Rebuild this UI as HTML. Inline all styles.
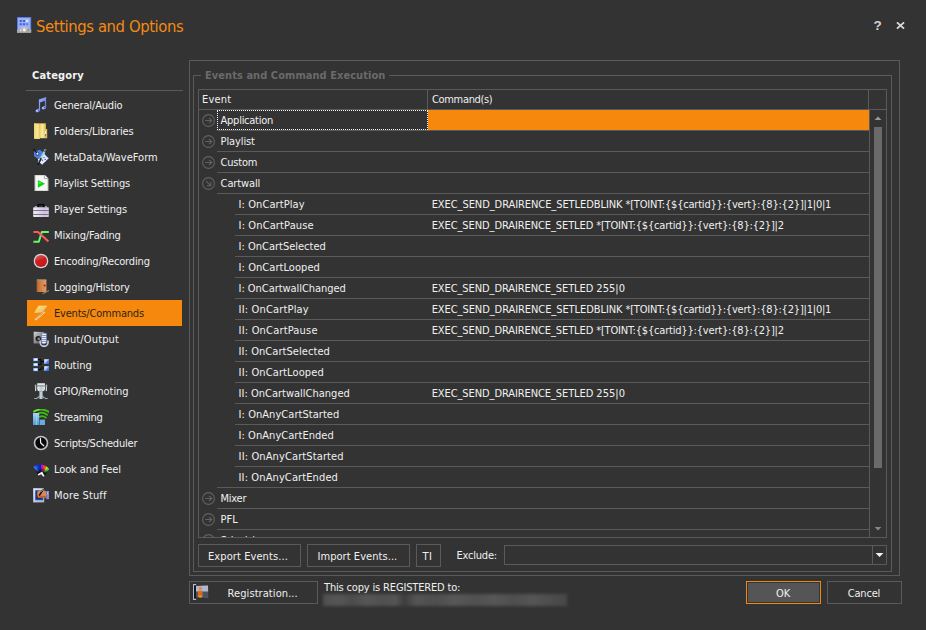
<!DOCTYPE html><html><head><meta charset="utf-8"><title>Settings and Options</title><style>
*{margin:0;padding:0;box-sizing:border-box}
html,body{width:926px;height:630px;overflow:hidden;background:#333333}
body{position:relative;font-family:"DejaVu Sans Condensed","Liberation Sans",sans-serif;font-size:11px;color:#f0f0f0;line-height:13px}
.a{position:absolute;white-space:pre}
.b{position:absolute;border:1px solid #5a5a5a}
.ln{position:absolute;height:1px;background:#5a5a5a}
.vl{position:absolute;width:1px;background:#5a5a5a}
.title{left:36px;top:16px;font-size:16.5px;line-height:21px;color:#f28a14}
.cat{left:32px;top:69px;font-weight:bold;color:#f2f2f2}
.si{left:27px;width:155px;height:26px}
.si svg{position:absolute;left:6px;top:5px}
.si span{position:absolute;left:27px;top:7px}
.sel{background:#f6890d;color:#2c2418}
.gt{left:205px;top:69px;font-weight:bold;color:#6a6a6a}
.row{position:absolute;left:0;width:670px;height:21px}
.row span{position:absolute;top:4px;white-space:pre}
.row i{position:absolute;bottom:0;right:0;height:1px;background:#5a5a5a}
.row svg{position:absolute;left:3px;top:4px}
.btn{position:absolute;border:1px solid #5a5a5a;height:23px}
.btn span{position:absolute;top:5px;white-space:pre}
</style></head><body>
<svg class="a" style="left:17px;top:17px" width="15" height="16" viewBox="0 0 15 16"><defs><linearGradient id="tg" x1="0" y1="0" x2="0" y2="1"><stop offset="0" stop-color="#d0d0d0"/><stop offset="1" stop-color="#9c9c9c"/></linearGradient></defs><rect x="0" y="0" width="14.2" height="16" rx="0.6" fill="#5a78ec"/><rect x="1" y="1" width="12.2" height="11.5" fill="#9db0f2"/><rect x="2.6" y="3" width="2.2" height="2" fill="#3c64dc"/><rect x="5.9" y="3" width="2.2" height="2" fill="#3c64dc"/><rect x="9" y="2.8" width="2.2" height="2.2" fill="#b8f8ff"/><rect x="2.6" y="6.2" width="2.2" height="2" fill="#3c64dc"/><rect x="5.9" y="6.2" width="2.2" height="2" fill="#3c64dc"/><rect x="9" y="6.2" width="2.2" height="2" fill="#5c80e4"/><path d="M0 12.6 H3 Q7.3 6.8 11.6 12.6 H14.2 V15.6 Q14.2 16 13.8 16 H0.4 Q0 16 0 15.6 Z" fill="url(#tg)"/><circle cx="7.3" cy="13" r="1.5" fill="#f4f4f4"/><rect x="3" y="12.6" width="1.2" height="1.6" fill="#f0f0f0"/><rect x="10.1" y="12.2" width="0.9" height="1.7" fill="#f09030"/><rect x="11" y="12.2" width="0.9" height="1.7" fill="#30b040"/></svg>
<div class="a title" style="letter-spacing:-0.412px;">Settings and Options</div>
<div class="a" style="left:873.4px;top:18.4px;font-weight:bold;font-size:13.5px;line-height:16px;color:#d4d4d4;font-family:'Liberation Sans',sans-serif">?</div>
<svg class="a" style="left:896px;top:22px" width="9" height="7" viewBox="0 0 9 7"><path d="M0.9 0.3 L8.1 6.7 M8.1 0.3 L0.9 6.7" stroke="#dadada" stroke-width="1.7" fill="none"/></svg>
<div class="a cat" style="letter-spacing:0.174px;">Category</div>
<div class="ln" style="left:26px;top:90px;width:157px"></div>
<div class="a si" style="top:92px"><svg width="16" height="16" viewBox="0 0 16 16"><defs><linearGradient id="n1" x1="0" y1="0" x2="1" y2="1"><stop offset="0" stop-color="#9fb4ff"/><stop offset="1" stop-color="#5a70d8"/></linearGradient></defs><path d="M5.9 2.5 L13.1 0 V11 H11.9 V3.8 L7.1 5.5 V14 H5.9 Z" fill="url(#n1)"/><ellipse cx="4.8" cy="13.6" rx="2.3" ry="1.6" transform="rotate(-20 4.8 13.6)" fill="#7f98f0"/><ellipse cx="10.9" cy="10.7" rx="2.3" ry="1.6" transform="rotate(-20 10.9 10.7)" fill="#7f98f0"/><ellipse cx="4" cy="13.7" rx="0.9" ry="0.7" fill="#d8e4ff"/><ellipse cx="10.1" cy="10.9" rx="0.9" ry="0.7" fill="#d8e4ff"/><ellipse cx="5.6" cy="13.3" rx="0.8" ry="0.5" fill="#3040c0"/><ellipse cx="11.6" cy="10.4" rx="0.8" ry="0.5" fill="#3040c0"/></svg><span style="letter-spacing:-0.151px;">General/Audio</span></div>
<div class="a si" style="top:118px"><svg width="16" height="16" viewBox="0 0 16 16"><defs><linearGradient id="f1" x1="0" y1="0" x2="1" y2="0"><stop offset="0" stop-color="#ecc85c"/><stop offset="0.5" stop-color="#f8eaa0"/><stop offset="1" stop-color="#e4bc50"/></linearGradient><linearGradient id="f2" x1="0" y1="0" x2="1" y2="0"><stop offset="0" stop-color="#f0d470"/><stop offset="0.6" stop-color="#f6e69a"/><stop offset="1" stop-color="#e8c860"/></linearGradient></defs><path d="M1 0.3 H12.8 V6 H14.2 V15.2 H6.5 V16 H1 Z" fill="#e6bf52"/><path d="M6.3 1 H12.5 V15 H6.3 Z" fill="url(#f1)"/><path d="M1 0.5 L6 1.2 L7 15.9 L1 15.3 Z" fill="url(#f2)"/><rect x="12" y="8.1" width="1.1" height="3" fill="#f4f4f4"/><rect x="12" y="11" width="1.1" height="2.2" fill="#2c90e0"/></svg><span style="letter-spacing:-0.128px;">Folders/Libraries</span></div>
<div class="a si" style="top:144px"><svg width="16" height="16" viewBox="0 0 16 16"><path d="M1 2.6 L7 0.8 L11 4.2 L5.2 10 L1 7.2 Z" fill="#4a7ee8"/><path d="M5 9.8 L11 4.4 L15.8 9.4 L9.2 15.8 L5 12.4 Z" fill="#e6eaf8" stroke="#3054a8" stroke-width="0.8" stroke-dasharray="1 1"/><circle cx="9.4" cy="11.2" r="0.7" fill="#2a50b0"/><circle cx="11" cy="8.6" r="0.7" fill="#2a50b0"/><circle cx="12.2" cy="10.4" r="0.7" fill="#2a50b0"/><circle cx="4.4" cy="4.6" r="1.5" fill="#f4f4f4" stroke="#203040" stroke-width="0.8"/><path d="M0.3 0 L4 3.8" stroke="#101010" stroke-width="1.1"/><path d="M12.6 0.4 L7.6 10.4" stroke="#9cdcec" stroke-width="2"/><path d="M13 1 L11.6 3" stroke="#505050" stroke-width="1.6"/><path d="M8 9 L4.8 15.6" stroke="#181818" stroke-width="2"/><path d="M7 9.4 L5 13.6" stroke="#d0d0d0" stroke-width="0.8"/></svg><span style="letter-spacing:0.012px;">MetaData/WaveForm</span></div>
<div class="a si" style="top:170px"><svg width="16" height="16" viewBox="0 0 16 16"><path d="M2 0 H11.6 L15 3.4 V16 H2 Z" fill="#f6f6f6" stroke="#bcbcbc" stroke-width="1"/><path d="M11.4 0.2 V3.6 H14.8" fill="#ffffff" stroke="#a0a0a0" stroke-width="0.9"/><path d="M4.9 5 L12 8.7 L4.9 12.7 Z" fill="#12cc12"/><path d="M5.4 6.2 L9 8 L5.4 9.6 Z" fill="#30f030"/></svg><span style="letter-spacing:-0.166px;">Playlist Settings</span></div>
<div class="a si" style="top:196px"><svg width="16" height="16" viewBox="0 0 16 16"><defs><linearGradient id="b1" x1="0" y1="0" x2="1" y2="0"><stop offset="0" stop-color="#f0ecf8"/><stop offset="0.75" stop-color="#d0c0e4"/><stop offset="1" stop-color="#d8d0e8"/></linearGradient></defs><path d="M5.3 6.4 V3.6 H10.6 V6.4" fill="none" stroke="#050505" stroke-width="1.4"/><rect x="2" y="5.2" width="2" height="1.2" fill="#b8b8b8"/><rect x="12" y="5.2" width="2" height="1.2" fill="#b8b8b8"/><rect x="0.2" y="6.2" width="15.6" height="9.8" rx="0.8" fill="url(#b1)"/><rect x="0.2" y="9" width="15.6" height="0.9" fill="#6c6c6c"/><rect x="0.2" y="13" width="15.6" height="0.9" fill="#6c6c6c"/></svg><span style="letter-spacing:-0.095px;">Player Settings</span></div>
<div class="a si" style="top:222px"><svg width="16" height="16" viewBox="0 0 16 16"><path d="M0.4 14.7 H5.8 L8.8 5 H15.8" fill="none" stroke="#68f868" stroke-width="2" stroke-linejoin="round"/><path d="M0.4 5 H5 L15.4 14.4" fill="none" stroke="#fc5858" stroke-width="2.1" stroke-linejoin="round"/></svg><span style="letter-spacing:-0.103px;">Mixing/Fading</span></div>
<div class="a si" style="top:248px"><svg width="16" height="16" viewBox="0 0 16 16"><defs><linearGradient id="r1" x1="0" y1="0" x2="0.4" y2="1"><stop offset="0" stop-color="#e06060"/><stop offset="0.45" stop-color="#d03030"/><stop offset="0.5" stop-color="#c82020"/><stop offset="1" stop-color="#cc1818"/></linearGradient></defs><circle cx="8" cy="8" r="7.3" fill="#d4dade"/><circle cx="8" cy="8" r="6.1" fill="url(#r1)"/></svg><span style="letter-spacing:-0.138px;">Encoding/Recording</span></div>
<div class="a si" style="top:274px"><svg width="16" height="16" viewBox="0 0 16 16"><defs><linearGradient id="k1" x1="0" y1="0" x2="1" y2="0"><stop offset="0" stop-color="#a85c2c"/><stop offset="0.25" stop-color="#c87840"/><stop offset="1" stop-color="#e49c68"/></linearGradient></defs><rect x="3.8" y="0.6" width="9.6" height="1" fill="#e8e0d0"/><rect x="3.6" y="1.2" width="9.8" height="11.8" rx="0.5" fill="url(#k1)"/><circle cx="11.6" cy="6.6" r="1" fill="#a81c0c"/><path d="M9.6 14.6 L16 11.6" stroke="#8c8458" stroke-width="1.2"/></svg><span style="letter-spacing:-0.133px;">Logging/History</span></div>
<div class="a si sel" style="top:300px"><svg width="16" height="16" viewBox="0 0 16 16"><defs><linearGradient id="l1" x1="0" y1="0" x2="1" y2="1"><stop offset="0" stop-color="#f8e890"/><stop offset="1" stop-color="#e8b840"/></linearGradient></defs><path d="M5.6 1 H14 L8.8 7 L1.8 7.4 Z" fill="url(#l1)" stroke="#f4dca0" stroke-width="0.6"/><path d="M11.8 6.6 L2.4 14.8" stroke="#f4e0b8" stroke-width="1.8"/><path d="M11.4 6.6 L3 14" stroke="#b46c30" stroke-width="1" stroke-dasharray="1 0.6"/></svg><span style="letter-spacing:-0.198px;">Events/Commands</span></div>
<div class="a si" style="top:326px"><svg width="16" height="16" viewBox="0 0 16 16"><defs><linearGradient id="i1" x1="0" y1="0" x2="1" y2="1"><stop offset="0" stop-color="#d8d8d8"/><stop offset="0.5" stop-color="#909090"/><stop offset="1" stop-color="#404040"/></linearGradient></defs><path d="M0.7 0.7 L11 1 V12.4 L0.7 12.4 Z" fill="url(#i1)"/><circle cx="5.2" cy="7.6" r="2.7" fill="#1c1c1c"/><circle cx="5.7" cy="7.9" r="1.3" fill="#8a8a8a"/><path d="M7.2 9.4 V11.4 a3.9 3.9 0 0 0 7.8 0 V9.4" fill="none" stroke="#c0c8e0" stroke-width="1.7"/><path d="M8.4 2.2 H13.6 V10.6 Q13.6 12.9 11 12.9 Q8.4 12.9 8.4 10.6 Z" fill="#f4f6ff" stroke="#6070a0" stroke-width="0.7"/><path d="M8.6 4.4 H13.4 M8.6 6.4 H13.4 M8.6 8.4 H13.4 M8.6 10.4 H13.4" stroke="#5a6a9c" stroke-width="0.8"/><rect x="10.2" y="14.8" width="1.6" height="1.2" fill="#e0e4f4"/></svg><span style="letter-spacing:0.138px;">Input/Output</span></div>
<div class="a si" style="top:352px"><svg width="16" height="16" viewBox="0 0 16 16"><defs><linearGradient id="q1" x1="0" y1="0" x2="1" y2="1"><stop offset="0" stop-color="#f4f8ff"/><stop offset="0.45" stop-color="#b4ccff"/><stop offset="0.55" stop-color="#5c90ff"/><stop offset="1" stop-color="#2058e8"/></linearGradient></defs><path d="M5 2.6 H8 V7.6 H5 M8 4.6 H11 M5 12.6 H8 V11 H11" fill="none" stroke="#080808" stroke-width="1"/><rect x="0.3" y="1" width="4.9" height="3.7" fill="#2c4c8c"/><rect x="0.3" y="1" width="4.6" height="3" fill="#9cb8ec"/><rect x="1.3" y="1.8" width="2.8" height="1.6" fill="#ffffff"/><rect x="0.3" y="6" width="4.9" height="3.7" fill="#2c4c8c"/><rect x="0.3" y="6" width="4.6" height="3" fill="#9cb8ec"/><rect x="1.3" y="6.8" width="2.8" height="1.6" fill="#ffffff"/><rect x="0.3" y="11" width="4.9" height="3.7" fill="#2c4c8c"/><rect x="0.3" y="11" width="4.6" height="3" fill="#9cb8ec"/><rect x="1.3" y="11.8" width="2.8" height="1.6" fill="#ffffff"/><rect x="11.2" y="2.2" width="4.8" height="4.8" fill="url(#q1)"/><rect x="11.2" y="9.2" width="4.8" height="4.8" fill="url(#q1)"/></svg><span style="letter-spacing:-0.029px;">Routing</span></div>
<div class="a si" style="top:378px"><svg width="16" height="16" viewBox="0 0 16 16"><defs><linearGradient id="c1" x1="0" y1="0" x2="1" y2="0"><stop offset="0" stop-color="#f0f6fa"/><stop offset="0.5" stop-color="#b8c8d4"/><stop offset="1" stop-color="#e0e8ee"/></linearGradient></defs><rect x="2" y="1.4" width="1.3" height="6.8" rx="0.6" fill="#c4d0d8"/><rect x="12.7" y="1.4" width="1.3" height="6.8" rx="0.6" fill="#c4d0d8"/><rect x="4.2" y="0.2" width="7.8" height="2.6" fill="#e4e4e4"/><path d="M4.2 3 H12 V6 Q12 8.4 9.6 8.6 H6.6 Q4.2 8.4 4.2 6 Z" fill="url(#c1)"/><rect x="1" y="2.6" width="14" height="0.8" fill="#7c7c7c"/><rect x="6.4" y="8.4" width="3.2" height="7.6" fill="#c0ccd4"/><path d="M6.6 12.6 Q5.6 15.4 1.2 15.8 M9.4 12.6 Q10.4 15.4 14.8 15.8" fill="none" stroke="#a8b4bc" stroke-width="1.1"/></svg><span style="letter-spacing:-0.033px;">GPIO/Remoting</span></div>
<div class="a si" style="top:404px"><svg width="16" height="16" viewBox="0 0 16 16"><defs><linearGradient id="s1" x1="0" y1="0" x2="0" y2="1"><stop offset="0" stop-color="#a8d4f6"/><stop offset="1" stop-color="#4c9cd4"/></linearGradient></defs><path d="M0.8 2.6 Q8 -1.6 15.4 2.6" fill="none" stroke="#3cc010" stroke-width="2" stroke-linecap="round"/><path d="M1.2 2.2 Q4 0.8 6 0.6" fill="none" stroke="#a8f050" stroke-width="0.9" stroke-linecap="round"/><path d="M5.6 4.2 Q10 2.6 14 5.8" fill="none" stroke="#3cc010" stroke-width="1.9" stroke-linecap="round"/><path d="M6.8 7.6 Q10 6.4 12.8 8.6" fill="none" stroke="#3cc010" stroke-width="1.8" stroke-linecap="round"/><rect x="0" y="4" width="6.2" height="12" fill="url(#s1)"/><rect x="3.2" y="4" width="0.8" height="12" fill="#c4e4fa" opacity="0.6"/><rect x="6.6" y="10.6" width="5.4" height="5.4" fill="#68acdc"/></svg><span style="letter-spacing:-0.288px;">Streaming</span></div>
<div class="a si" style="top:430px"><svg width="16" height="16" viewBox="0 0 16 16"><circle cx="8" cy="8" r="6.5" fill="#080808" stroke="#c0c0c8" stroke-width="1.6"/><path d="M7.4 3.4 L7.7 8 L10.8 10.8" fill="none" stroke="#f4f4f4" stroke-width="1.2" stroke-linecap="round" stroke-linejoin="round"/></svg><span style="letter-spacing:-0.203px;">Scripts/Scheduler</span></div>
<div class="a si" style="top:456px"><svg width="16" height="16" viewBox="0 0 16 16"><defs><radialGradient id="w2" gradientUnits="userSpaceOnUse" cx="8.5" cy="15" r="12.3"><stop offset="0.35" stop-color="#000" stop-opacity="0.7"/><stop offset="0.7" stop-color="#000" stop-opacity="0"/></radialGradient></defs><path d="M0.2 5.9 L2.2 4.7 L6.1 11.1 L5.4 11.6 Z" fill="#3474ff"/><path d="M2.0 4.8 L4.2 4.0 L6.8 10.7 L6.0 11.1 Z" fill="#1c50f0"/><path d="M3.9 4.1 L6.2 3.6 L7.6 10.5 L6.7 10.8 Z" fill="#1030d8"/><path d="M6.0 3.6 L8.2 3.6 L8.4 10.4 L7.5 10.5 Z" fill="#1420b0"/><path d="M8.0 3.6 L10.2 3.9 L9.2 10.5 L8.3 10.4 Z" fill="#a020e0"/><path d="M9.9 3.9 L12.0 4.6 L10.0 10.6 L9.1 10.4 Z" fill="#ff20a0"/><path d="M11.8 4.5 L13.6 5.6 L10.7 11.0 L9.9 10.6 Z" fill="#ff5800"/><path d="M13.4 5.5 L15.1 6.8 L11.4 11.4 L10.6 10.9 Z" fill="#f8e000"/><path d="M14.9 6.6 L16.2 8.2 L12.0 12.0 L11.3 11.3 Z" fill="#30f060"/><path d="M0 6 L8 2 L16 8 L12.5 14 L8.5 12 L4.5 13 Z" fill="url(#w2)"/><path d="M4.8 13.2 L9.2 10.6 L11.6 15.2 L10 15.6 L8.4 13.2 L5.4 14.6 Z" fill="#f6f6f6"/></svg><span style="letter-spacing:-0.100px;">Look and Feel</span></div>
<div class="a si" style="top:482px"><svg width="16" height="16" viewBox="0 0 16 16"><defs><linearGradient id="m1" x1="0" y1="0" x2="1" y2="1"><stop offset="0" stop-color="#e8ecf4"/><stop offset="1" stop-color="#a8b0c4"/></linearGradient></defs><rect x="0.2" y="1.2" width="11" height="14.2" fill="url(#m1)"/><rect x="2.2" y="3.2" width="8" height="10" fill="#1848e8"/><rect x="3.3" y="4.3" width="5.8" height="7.8" fill="#30302c"/><path d="M4.4 4.6 L7 3 L9 4.4 L12.8 3.8 L13.2 10.6 L9.4 10.4 L5 10.8 L4.2 7.6 Z" fill="#e0884c"/><path d="M5 10.8 L9.4 10.4 L13.2 10.6 L13.2 9 L9 8.8 L5.6 9.6 Z" fill="#c0602c"/><rect x="13.2" y="4" width="2.8" height="8.2" fill="#8888c8"/><rect x="14.2" y="5.4" width="0.8" height="2" fill="#d0d0f0"/><path d="M11.6 0.4 L6.2 8.6" stroke="#101010" stroke-width="1.6"/><path d="M11.2 0.6 L8.4 4.8" stroke="#a8d0d8" stroke-width="0.8"/></svg><span style="letter-spacing:0.159px;">More Stuff</span></div>
<div class="b" style="left:189px;top:60px;width:711px;height:516px"></div>
<div class="b" style="left:193px;top:75px;width:699px;height:497px"></div>
<div class="a" style="left:201px;top:70px;width:188px;height:12px;background:#333333"></div>
<div class="a gt" style="letter-spacing:0.051px;">Events and Command Execution</div>
<div class="b" style="left:198px;top:89px;width:689px;height:449px"></div>
<div class="ln" style="left:199px;top:109px;width:687px"></div>
<div class="vl" style="left:427px;top:90px;height:19px"></div>
<div class="vl" style="left:868px;top:90px;height:19px"></div>
<div class="vl" style="left:869px;top:110px;height:427px"></div>
<div class="a" style="left:202px;top:93px;letter-spacing:0.168px;">Event</div>
<div class="a" style="left:432px;top:93px;letter-spacing:-0.335px;">Command(s)</div>
<div class="a" style="left:199px;top:110px;width:670px;height:427px;overflow:hidden">
<div class="row" style="top:0px"><div style="position:absolute;left:229px;top:0;width:441px;height:20px;background:#f6890d"></div><div style="position:absolute;left:18px;top:0;width:211px;height:20px;border:1px dotted #f4f4f4"></div><svg width="13" height="13" viewBox="0 0 13 13"><circle cx="6.5" cy="6.5" r="5.9" fill="none" stroke="#626262" stroke-width="1.1"/><path d="M3.2 6.5 H9.8 M7 3.8 L9.8 6.5 L7 9.2" stroke="#626262" stroke-width="1.1" fill="none"/></svg><span style="left:21.6px;letter-spacing:-0.263px;">Application</span><i style="width:652px"></i></div>
<div class="row" style="top:21px"><svg width="13" height="13" viewBox="0 0 13 13"><circle cx="6.5" cy="6.5" r="5.9" fill="none" stroke="#626262" stroke-width="1.1"/><path d="M3.2 6.5 H9.8 M7 3.8 L9.8 6.5 L7 9.2" stroke="#626262" stroke-width="1.1" fill="none"/></svg><span style="left:21.6px;letter-spacing:-0.109px;">Playlist</span><i style="width:652px"></i></div>
<div class="row" style="top:42px"><svg width="13" height="13" viewBox="0 0 13 13"><circle cx="6.5" cy="6.5" r="5.9" fill="none" stroke="#626262" stroke-width="1.1"/><path d="M3.2 6.5 H9.8 M7 3.8 L9.8 6.5 L7 9.2" stroke="#626262" stroke-width="1.1" fill="none"/></svg><span style="left:21.6px;letter-spacing:-0.204px;">Custom</span><i style="width:652px"></i></div>
<div class="row" style="top:63px"><svg width="13" height="13" viewBox="0 0 13 13"><circle cx="6.5" cy="6.5" r="5.9" fill="none" stroke="#626262" stroke-width="1.1"/><path d="M4.2 4.2 L8.8 8.8 M8.8 4.8 V8.8 H4.8" stroke="#626262" stroke-width="1.1" fill="none"/></svg><span style="left:21.6px;letter-spacing:-0.124px;">Cartwall</span><i style="width:652px"></i></div>
<div class="row" style="top:84px"><span style="left:39.6px;letter-spacing:0.083px;">I: OnCartPlay</span><span style="left:232.7px;letter-spacing:-0.074px;">EXEC_SEND_DRAIRENCE_SETLEDBLINK</span><span style="left:423.5px;letter-spacing:-0.203px;"> *[TOINT:{${cartid}}:{vert}:{8}:{2}]|1|0|1</span><i style="width:634px"></i></div>
<div class="row" style="top:105px"><span style="left:39.6px;letter-spacing:0.119px;">I: OnCartPause</span><span style="left:232.7px;letter-spacing:-0.096px;">EXEC_SEND_DRAIRENCE_SETLED</span><span style="left:394.2px;letter-spacing:-0.192px;"> *[TOINT:{${cartid}}:{vert}:{8}:{2}]|2</span><i style="width:634px"></i></div>
<div class="row" style="top:126px"><span style="left:39.6px;letter-spacing:-0.006px;">I: OnCartSelected</span><i style="width:634px"></i></div>
<div class="row" style="top:147px"><span style="left:39.6px;letter-spacing:0.055px;">I: OnCartLooped</span><i style="width:634px"></i></div>
<div class="row" style="top:168px"><span style="left:39.6px;letter-spacing:-0.051px;">I: OnCartwallChanged</span><span style="left:232.7px;letter-spacing:-0.096px;">EXEC_SEND_DRAIRENCE_SETLED</span><span style="left:394.2px;letter-spacing:0.021px;"> 255|0</span><i style="width:634px"></i></div>
<div class="row" style="top:189px"><span style="left:39.6px;letter-spacing:0.162px;">II: OnCartPlay</span><span style="left:232.7px;letter-spacing:-0.074px;">EXEC_SEND_DRAIRENCE_SETLEDBLINK</span><span style="left:423.5px;letter-spacing:-0.203px;"> *[TOINT:{${cartid}}:{vert}:{8}:{2}]|1|0|1</span><i style="width:634px"></i></div>
<div class="row" style="top:210px"><span style="left:39.6px;letter-spacing:0.183px;">II: OnCartPause</span><span style="left:232.7px;letter-spacing:-0.096px;">EXEC_SEND_DRAIRENCE_SETLED</span><span style="left:394.2px;letter-spacing:-0.192px;"> *[TOINT:{${cartid}}:{vert}:{8}:{2}]|2</span><i style="width:634px"></i></div>
<div class="row" style="top:231px"><span style="left:39.6px;letter-spacing:0.061px;">II: OnCartSelected</span><i style="width:634px"></i></div>
<div class="row" style="top:252px"><span style="left:39.6px;letter-spacing:0.119px;">II: OnCartLooped</span><i style="width:634px"></i></div>
<div class="row" style="top:273px"><span style="left:39.6px;letter-spacing:0.003px;">II: OnCartwallChanged</span><span style="left:232.7px;letter-spacing:-0.096px;">EXEC_SEND_DRAIRENCE_SETLED</span><span style="left:394.2px;letter-spacing:0.021px;"> 255|0</span><i style="width:634px"></i></div>
<div class="row" style="top:294px"><span style="left:39.6px;letter-spacing:0.046px;">I: OnAnyCartStarted</span><i style="width:634px"></i></div>
<div class="row" style="top:315px"><span style="left:39.6px;letter-spacing:0.043px;">I: OnAnyCartEnded</span><i style="width:634px"></i></div>
<div class="row" style="top:336px"><span style="left:39.6px;letter-spacing:0.118px;">II: OnAnyCartStarted</span><i style="width:634px"></i></div>
<div class="row" style="top:357px"><span style="left:39.6px;letter-spacing:0.112px;">II: OnAnyCartEnded</span><i style="width:652px"></i></div>
<div class="row" style="top:378px"><svg width="13" height="13" viewBox="0 0 13 13"><circle cx="6.5" cy="6.5" r="5.9" fill="none" stroke="#626262" stroke-width="1.1"/><path d="M3.2 6.5 H9.8 M7 3.8 L9.8 6.5 L7 9.2" stroke="#626262" stroke-width="1.1" fill="none"/></svg><span style="left:21.6px;letter-spacing:-0.274px;">Mixer</span><i style="width:652px"></i></div>
<div class="row" style="top:399px"><svg width="13" height="13" viewBox="0 0 13 13"><circle cx="6.5" cy="6.5" r="5.9" fill="none" stroke="#626262" stroke-width="1.1"/><path d="M3.2 6.5 H9.8 M7 3.8 L9.8 6.5 L7 9.2" stroke="#626262" stroke-width="1.1" fill="none"/></svg><span style="left:21.6px;letter-spacing:-0.057px;">PFL</span><i style="width:652px"></i></div>
<div class="row" style="top:420px"><svg width="13" height="13" viewBox="0 0 13 13"><circle cx="6.5" cy="6.5" r="5.9" fill="none" stroke="#626262" stroke-width="1.1"/><path d="M3.2 6.5 H9.8 M7 3.8 L9.8 6.5 L7 9.2" stroke="#626262" stroke-width="1.1" fill="none"/></svg><span style="left:21.6px;letter-spacing:-0.840px;">Scheduler</span><i style="width:652px"></i></div>
</div>
<svg class="a" style="left:874px;top:116px" width="8" height="5" viewBox="0 0 8 5"><path d="M0.6 4 L4 0.6 L7.4 4 Z" fill="#9a9a9a"/></svg>
<svg class="a" style="left:874px;top:526px" width="8" height="5" viewBox="0 0 8 5"><path d="M0.6 1 L4 4.4 L7.4 1 Z" fill="#868686"/></svg>
<div class="a" style="left:874px;top:127px;width:8px;height:341px;background:#6a6a6a"></div>
<div class="btn" style="left:198px;top:544px;width:103px"><span style="left:9.0px;letter-spacing:0.089px;">Export Events...</span></div>
<div class="btn" style="left:307px;top:544px;width:103px"><span style="left:9.5px;letter-spacing:0.055px;">Import Events...</span></div>
<div class="btn" style="left:416px;top:544px;width:25px"><span style="left:5.5px;letter-spacing:0.566px;">TI</span></div>
<div class="a" style="left:456.4px;top:549px;letter-spacing:-0.187px;">Exclude:</div>
<div class="b" style="left:504px;top:545px;width:383px;height:20px"></div>
<div class="vl" style="left:872px;top:546px;height:18px"></div>
<svg class="a" style="left:875px;top:552px" width="9" height="6" viewBox="0 0 9 6"><path d="M0.6 1 L4.5 5 L8.4 1 Z" fill="#f4f4f4"/></svg>
<div class="btn" style="left:189px;top:581px;width:129px"><svg style="position:absolute;left:2px;top:1px" width="18" height="19" viewBox="0 0 18 19"><defs><linearGradient id="g1" x1="0" y1="0" x2="0" y2="1"><stop offset="0" stop-color="#e07018"/><stop offset="0.6" stop-color="#d86410"/><stop offset="1" stop-color="#f8bc28"/></linearGradient></defs><path d="M4 3 L16 2.4 L16.3 15.2 L4 14.6 Z" fill="#4a5264"/><path d="M4 3 L16 2.4 L16.15 8.6 L4 8.6 Z" fill="#b0b8cc"/><path d="M4.2 1.6 H1.6 V16.4 H4.2" fill="none" stroke="#b4b8d4" stroke-width="1.2"/><path d="M2.9 2.4 V15.6" stroke="#050505" stroke-width="1.2"/><circle cx="8.3" cy="5.3" r="1.5" fill="#e47820"/><circle cx="8" cy="4.9" r="0.5" fill="#ffe0b0"/><rect x="5.9" y="7.6" width="4.7" height="6.8" rx="2.2" fill="url(#g1)"/></svg><span style="left:37.6px;letter-spacing:0.076px;">Registration...</span></div>
<div class="a" style="left:324px;top:581px;letter-spacing:-0.161px;">This copy is REGISTERED to:</div>
<div class="a" style="left:323px;top:594px;width:244px;height:12px;filter:blur(1.6px);background:linear-gradient(90deg,#4e4e4e 0,#565656 6%,#4c4c4c 12%,#565656 18%,#505050 24%,#555 30%,#454545 32%,#3e3e3e 33.5%,#454545 35%,#545454 38%,#4e4e4e 46%,#585858 54%,#505050 62%,#575757 70%,#4e4e4e 78%,#565656 86%,#4c4c4c 94%,#484848 100%)"></div>
<div class="a" style="left:746px;top:581px;width:75px;height:23px;border:1px solid #f08a14;padding:1px"><div style="background:#555;height:19px;position:relative"><span class="a" style="left:27.9px;top:4px;letter-spacing:-0.041px;">OK</span></div></div>
<div class="btn" style="left:827px;top:581px;width:75px"><span style="left:19.8px;letter-spacing:-0.208px;">Cancel</span></div>
</body></html>
